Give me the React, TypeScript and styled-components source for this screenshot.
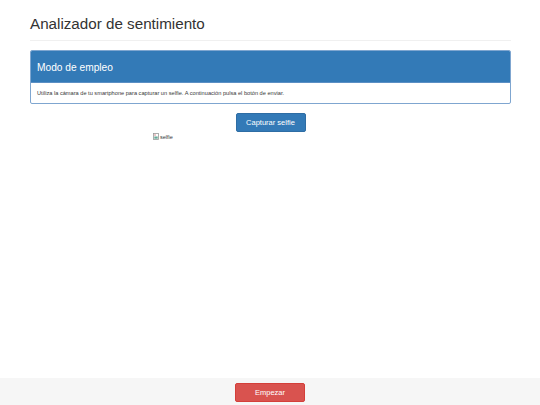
import React from "react";
import styled, { createGlobalStyle } from "styled-components";

const Global = createGlobalStyle`
  html, body { margin: 0; padding: 0; background: #fff; }
  body { font-family: "Liberation Sans", Arial, Helvetica, sans-serif; color: #333; }
  * { box-sizing: border-box; }
`;

const Page = styled.div`
  min-height: 100vh;
  display: flex;
  flex-direction: column;
`;

const Container = styled.main`
  padding: 0 29px 0 30px;
  display: flex;
  flex-direction: column;
`;

const Title = styled.h1`
  margin: 14px 0 0;
  font-size: 15.2px;
  font-weight: 400;
  line-height: 20px;
  color: #333;
`;

const Rule = styled.hr`
  margin: 6px 0 9px;
  border: 0;
  border-top: 1px solid #f0f0f0;
  height: 0;
`;

const Panel = styled.section`
  border: 1px solid #7fa6d0;
  border-radius: 2px;
  overflow: hidden;
`;

const PanelHeading = styled.div`
  background: #337ab7;
  color: #fff;
  height: 31px;
  display: flex;
  align-items: center;
  padding: 1px 6px 0;
  font-size: 10.2px;
`;

const PanelBody = styled.div`
  height: 21px;
  display: flex;
  align-items: center;
  padding: 0 6px;
  font-size: 5.65px;
  color: #3a3a3a;
  border-top: 1px solid #5b8fc4;
`;

const Center = styled.div`
  display: flex;
  justify-content: center;
`;

const Button = styled.button<{ $variant: "primary" | "danger" }>`
  width: 70px;
  height: 19px;
  border-radius: 2px;
  font-family: inherit;
  font-size: 7.5px;
  color: #fff;
  padding: 0;
  cursor: pointer;
  background: ${(p) => (p.$variant === "primary" ? "#337ab7" : "#d9534f")};
  border: 1px solid ${(p) => (p.$variant === "primary" ? "#2e6da4" : "#d43f3a")};
`;

const CaptureRow = styled(Center)`
  margin-top: 9px;
`;

const Broken = styled.div`
  margin: 1px 0 0 123px;
  display: flex;
  align-items: center;
  gap: 1px;
  font-size: 5.5px;
  color: #333;
`;

const Footer = styled.footer`
  margin-top: auto;
  height: 27px;
  background: #f6f6f6;
  display: flex;
  justify-content: center;
  align-items: center;
  padding-top: 1px;
`;

export default function App() {
  return (
    <Page>
      <Global />
      <Container>
        <Title>Analizador de sentimiento</Title>
        <Rule />
        <Panel>
          <PanelHeading>Modo de empleo</PanelHeading>
          <PanelBody>
            Utiliza la cámara de tu smartphone para capturar un selfie. A continuación pulsa el botón de enviar.
          </PanelBody>
        </Panel>
        <CaptureRow>
          <Button $variant="primary">Capturar selfie</Button>
        </CaptureRow>
        <Broken>
          <svg width="6" height="7" viewBox="0 0 6 7">
            <rect x="0.5" y="0.5" width="5" height="6" fill="#fff" stroke="#999" strokeWidth="0.8" />
            <rect x="1.3" y="3.5" width="3.4" height="2.2" fill="#6a9" />
            <circle cx="2" cy="2" r="0.7" fill="#c66" />
          </svg>
          <span>selfie</span>
        </Broken>
      </Container>
      <Footer>
        <Button $variant="danger">Empezar</Button>
      </Footer>
    </Page>
  );
}
